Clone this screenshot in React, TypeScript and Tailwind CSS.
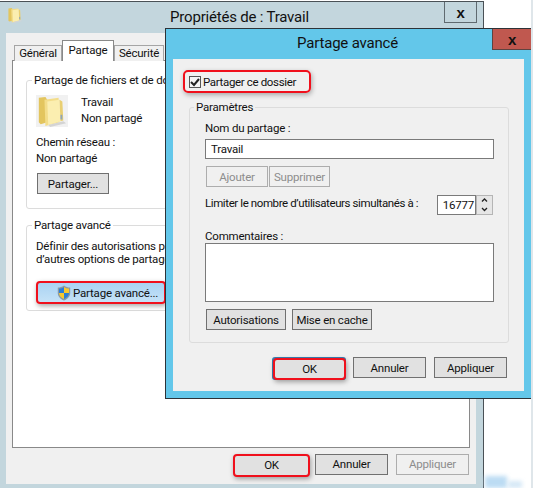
import { ReactNode } from 'react';

function FolderIcon({ size }: { size: number }) {
  return (
    <svg width={size} height={size} viewBox="0 0 32 34">
      <path d="M2 3 L9 2 L11 5 L11 29 L4 31 L2 29 Z" fill="#e3c55e" />
      <path d="M8 5 L23 3 L24 29 L9 33 Z" fill="#f3dd8a" />
      <path d="M11 7 L24 5 L25 28 L12 32 Z" fill="#fbeeb0" />
      <path d="M24 5 L27 7 L28 27 L25 28 Z" fill="#e9cf72" />
      <rect x="25" y="21" width="2" height="5" fill="#8fa6b8" />
      <path d="M12 32 L28 28 L31 30 L14 34 Z" fill="#d4d4d4" />
    </svg>
  );
}

function ShieldIcon() {
  return (
    <svg width="14" height="16" viewBox="0 0 14 16" className="shrink-0">
      <path d="M7 0.5 C5 2 3 2.5 0.8 2.5 L0.8 8 C0.8 11.5 3.5 14 7 15.5 C10.5 14 13.2 11.5 13.2 8 L13.2 2.5 C11 2.5 9 2 7 0.5 Z" fill="#8c9aa3" />
      <path d="M7 2 C5.5 3 3.8 3.5 2 3.5 L2 8 L7 8 Z" fill="#2b7fd6" />
      <path d="M7 2 C8.5 3 10.2 3.5 12 3.5 L12 8 L7 8 Z" fill="#f6c92e" />
      <path d="M2 8 L7 8 L7 14 C4.5 13 2 11 2 8 Z" fill="#f6c92e" />
      <path d="M12 8 L7 8 L7 14 C9.5 13 12 11 12 8 Z" fill="#2b7fd6" />
    </svg>
  );
}

function CloseGlyph() {
  return <span className='font-["Liberation_Sans",sans-serif] text-[15px] font-bold leading-none text-[#111]'>x</span>;
}

function Button({ children, className }: { children: ReactNode; className: string }) {
  return <div className={`flex h-[21px] items-center justify-center border border-[#707070] bg-[#e1e1e1] text-[11.5px] text-[#111] ${className}`}>{children}</div>;
}

function DisabledButton({ children, className }: { children: ReactNode; className: string }) {
  return <div className={`flex h-[21px] items-center justify-center border border-[#adadad] bg-[#f0f0f0] text-[11.5px] text-[#8d8d8d] ${className}`}>{children}</div>;
}

function RedButton({ children, className }: { children: ReactNode; className: string }) {
  return (
    <div className={`flex items-center rounded-[4px] border-2 border-[#f0101c] text-[11.5px] text-[#111] shadow-[1px_2px_5px_rgba(0,0,0,0.35)] ${className}`}>
      {children}
    </div>
  );
}

function Group({ title, legendClass, className, children }: { title: string; legendClass: string; className: string; children: ReactNode }) {
  return (
    <fieldset className={`rounded-[3px] border border-[#dcdcdc] ${className}`}>
      <legend className={`h-[16px] px-[2px] text-[11.5px] leading-[16px] ${legendClass}`}>{title}</legend>
      {children}
    </fieldset>
  );
}

function SharingTab() {
  return (
    <div className="-mt-px h-[388px] w-[458px] border border-[#898989] bg-white pl-[13px] pt-[11px] text-[11.5px] leading-[16px] text-[#111]">
      <Group title="Partage de fichiers et de dossiers" legendClass="-ml-[4px]" className="h-[137px] w-[430px] pl-[9px]">
        <div className="mt-[7px] flex items-start gap-[13px]">
          <div className="bg-[#f1f1f1]">
            <FolderIcon size={32} />
          </div>
          <div className="-mt-px">
            <p>Travail</p>
            <p>Non partagé</p>
          </div>
        </div>
        <p className="mt-[7px]">Chemin réseau :</p>
        <p>Non partagé</p>
        <Button className="ml-[1px] mt-[7px] w-[72px]">Partager...</Button>
      </Group>
      <Group title="Partage avancé" legendClass="-ml-[4px]" className="mt-[8px] h-[94px] w-[430px] pl-[9px]">
        <p className="mt-[5px]">Définir des autorisations personnalisées,</p>
        <p className="-mt-[3px]">d’autres options de partage</p>
        <RedButton className="mt-[14px] h-[23px] w-[130px] gap-[2px] bg-gradient-to-b from-[#a9d3f3] to-[#c5e2f7] pl-[19px]">
          <ShieldIcon />
          Partage avancé...
        </RedButton>
      </Group>
    </div>
  );
}

function MainWindow() {
  return (
    <div className="absolute left-0 top-px h-[487px] w-[484px] border-r border-t border-[#4a5156] bg-[#c3d6dd]">
      <div className="grid h-[31px] grid-cols-[1fr_auto_1fr]">
        <div className="pl-[7px] pt-[5px]">
          <FolderIcon size={16} />
        </div>
        <p className="pr-[4px] pt-[3px] text-[15px] leading-[24px] text-[#111]">Propriétés de : Travail</p>
        <div className="flex justify-end pr-[6px]">
          <div className="flex h-[21px] w-[33px] items-center justify-center border-x border-b border-[#5f6a70]">
            <CloseGlyph />
          </div>
        </div>
      </div>
      <div className="ml-[6px] h-[451px] w-[470px] bg-[#f0f0f0] px-[6px] pt-[8px]">
        <div className="ml-[2px] flex h-[20px] items-end text-[11.5px] text-[#111]">
          <div className="flex h-[16px] w-[48px] items-center justify-center border border-b-0 border-[#a5a5a5] bg-[#f0f0f0]">Général</div>
          <div className="relative z-10 flex h-[21px] w-[52px] items-start justify-center border border-b-0 border-[#898989] bg-white pt-px">Partage</div>
          <div className="flex h-[16px] w-[50px] items-center justify-center border border-b-0 border-[#a5a5a5] bg-[#f0f0f0]">Sécurité</div>
        </div>
        <SharingTab />
        <div className="mt-[6px] flex justify-end gap-[5px] pr-px">
          <RedButton className="h-[23px] w-[77px] justify-center bg-[#e1e1e1]">OK</RedButton>
          <Button className="w-[73px]">Annuler</Button>
          <DisabledButton className="ml-[3px] w-[73px]">Appliquer</DisabledButton>
        </div>
      </div>
    </div>
  );
}

function SharingDialog() {
  return (
    <div className="absolute left-[165px] top-[28px] h-[371px] w-[367px] border border-[#2d3338] bg-[#63c7ea] text-[11.5px] leading-[16px] text-[#111]">
      <div className="grid h-[30px] grid-cols-[1fr_auto_1fr]">
        <div />
        <p className="pr-[2px] pt-[2px] text-[15px] leading-[24px]">Partage avancé</p>
        <div className="flex justify-end">
          <div className="flex h-[21px] w-[39px] items-center justify-center border-b border-l border-[#5f4340] bg-[#c0584f]">
            <CloseGlyph />
          </div>
        </div>
      </div>
      <div className="ml-[7px] h-[332px] w-[351px] bg-[#f0f0f0] pl-[10px] pt-[11px]">
        <div className="flex h-[23px] w-[128px] items-center rounded-[5px] border-2 border-[#f0101c] pl-[4px] shadow-[1px_2px_5px_rgba(0,0,0,0.3)]">
          <div className="flex h-[12px] w-[12px] items-center justify-center border border-[#555] bg-[#f4f4f4]">
            <svg width="10" height="10" viewBox="0 0 10 10">
              <path d="M1 5 L4 8 L9 2" fill="none" stroke="#222" strokeWidth="2" />
            </svg>
          </div>
          <span className="ml-[2px] tracking-[-0.35px]">Partager ce dossier</span>
        </div>
        <Group title="Paramètres" legendClass="-ml-[11px]" className="ml-[6px] mt-[6px] h-[244px] w-[320px] pl-[15px]">
          <p className="mt-[5px]">Nom du partage :</p>
          <div className="mt-[3px] flex h-[20px] w-[289px] items-center border border-[#7a7a7a] bg-white pl-[5px]">Travail</div>
          <div className="mt-[7px] flex gap-px pl-px">
            <DisabledButton className="w-[62px]">Ajouter</DisabledButton>
            <DisabledButton className="w-[61px]">Supprimer</DisabledButton>
          </div>
          <div className="mt-[8px] flex h-[20px] w-[289px] items-center">
            <p className="w-[232px] -translate-y-[2px] tracking-[-0.4px]">Limiter le nombre d’utilisateurs simultanés à :</p>
            <div className="flex h-[20px] w-[39px] items-center justify-end overflow-hidden border border-[#7a7a7a] bg-white pr-px">16777</div>
            <div className="flex h-[20px] w-[17px] flex-col gap-px border border-[#b5b5b5] bg-[#e6e6e6]">
              <svg className="h-[8px] w-full" viewBox="0 0 15 8">
                <path d="M5 5.5 L7.5 3 L10 5.5" fill="none" stroke="#222" strokeWidth="1.3" />
              </svg>
              <svg className="h-[8px] w-full" viewBox="0 0 15 8">
                <path d="M5 3 L7.5 5.5 L10 3" fill="none" stroke="#222" strokeWidth="1.3" />
              </svg>
            </div>
          </div>
          <p className="mt-[15px] leading-[13px]">Commentaires :</p>
          <div className="h-[59px] w-[289px] border border-[#7a7a7a] bg-white" />
          <div className="mt-[7px] flex gap-[6px] pl-px">
            <Button className="w-[80px]">Autorisations</Button>
            <Button className="w-[80px]">Mise en cache</Button>
          </div>
        </Group>
        <div className="mt-[14px] flex items-start pl-[89px]">
          <div className="rounded-[3px] bg-[#3c7fb1] pl-px pt-px">
            <RedButton className="h-[22px] w-[73px] justify-center bg-[#e1e1e1]">OK</RedButton>
          </div>
          <Button className="ml-[7px] w-[73px]">Annuler</Button>
          <Button className="ml-[8px] w-[73px]">Appliquer</Button>
        </div>
      </div>
    </div>
  );
}

export default function App() {
  return (
    <div className='relative h-[488px] w-[533px] overflow-hidden whitespace-nowrap bg-white font-["Roboto",sans-serif] tracking-[-0.2px]'>
      <MainWindow />
      <SharingDialog />
      {/* bits of the desktop behind the windows */}
      <div className="absolute bottom-0 left-[485px] h-[12px] w-[22px] bg-[#bcdcf3] blur-[2px]" />
      <div className="absolute bottom-0 left-[508px] h-[7px] w-[14px] bg-[#d5e8f6] blur-[2px]" />
      <div className="absolute right-0 top-0 h-full w-[2px] bg-[#dfe6ea]" />
    </div>
  );
}
